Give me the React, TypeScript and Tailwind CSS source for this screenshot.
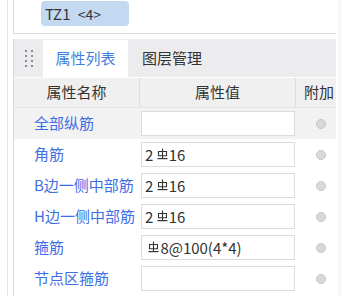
import React from "react";

const rows = [
  { name: "全部纵筋", value: "", gray: true },
  { name: "角筋", value: "2 |16" },
  { name: "B边一侧中部筋", value: "2 |16" },
  { name: "H边一侧中部筋", value: "2 |16" },
  { name: "箍筋", value: " |8@100(4*4)" },
  { name: "节点区箍筋", value: "" },
];

const Rebar = () => (
  <svg width="11" height="14" viewBox="0 0 11 14" className="inline-block mr-[1px] -mt-[4px] align-middle">
    <path d="M5.5 0.5V10.5" stroke="#333" strokeWidth="1.1" fill="none" />
    <path d="M1.5 3.5H9.5V7.8H1.5Z" stroke="#333" strokeWidth="1.1" fill="none" />
    <path d="M0.5 10.6H10.5" stroke="#333" strokeWidth="1.2" />
  </svg>
);

const Value = ({ text }: { text: string }) => {
  const parts = text.split("|");
  return (
    <>
      {parts.map((p, i) => (
        <React.Fragment key={i}>
          {i > 0 && <Rebar />}
          {p}
        </React.Fragment>
      ))}
    </>
  );
};

export default function App() {
  return (
    <div
      className="w-[341px] h-[296px] bg-white overflow-hidden flex text-[#333]"
      style={{ fontFamily: '"Noto Sans CJK SC", "Noto Sans", sans-serif' }}
    >
      <div className="w-[7px] shrink-0" />
      <div className="w-px shrink-0 bg-[#e3e3e3]" />
      <div className="w-[5px] shrink-0" />
      <div className="w-[323px] shrink-0 flex flex-col">
        <div className="h-[34px] border-l border-b border-[#dcdcdc] pl-[27px] pt-px">
          <div className="w-[88px] h-[25px] rounded-[4px] bg-[#c3d9f2] text-[15px] leading-[25px] pl-[4px] text-[#333] whitespace-pre">
            TZ1 <span className="ml-[4px] text-[14px]">&lt;4&gt;</span>
          </div>
        </div>
        <div className="h-[5px]" />
        <div className="flex-1 border-l border-[#dcdcdc] flex flex-col">
          <div className="h-[38px] bg-[#ececef] flex items-stretch pt-px">
            <div className="w-[29px] flex items-center justify-center">
              <div className="grid grid-cols-2 gap-x-[4px] gap-y-[3px] ml-[1px]">
                {Array.from({ length: 8 }).map((_, i) => (
                  <div key={i} className="w-[2px] h-[2px] bg-[#8a8a8a]" />
                ))}
              </div>
            </div>
            <div className="w-[85px] bg-white text-[#3f7fe0] text-[15px] flex items-center justify-center">
              属性列表
            </div>
            <div className="pl-[14px] text-[15px] text-[#333] flex items-center">图层管理</div>
          </div>
          <div className="h-px bg-white" />
          <div className="h-[30px] bg-[#f0f0f0] flex text-[15px] text-[#333] border-b border-[#e6e6e6]">
            <div className="w-[126px] flex items-center justify-center border-r border-[#dedede]">属性名称</div>
            <div className="w-[156px] flex items-center justify-center border-r border-[#dedede]">属性值</div>
            <div className="flex-1 flex items-center pl-[8px] whitespace-nowrap">附加</div>
          </div>
          {rows.map((r) => (
            <div
              key={r.name}
              className={`h-[31px] flex items-center ${r.gray ? "bg-[#f2f2f2]" : "bg-white"}`}
            >
              <div className="w-[126px] pl-[20px] text-[15px] text-[#3e6ee6] whitespace-nowrap">{r.name}</div>
              <div className="w-[154px] h-[25px] ml-px bg-white border border-[#dcdcdc] text-[15px] leading-[23px] pl-[3px] text-[#333] whitespace-pre">
                <Value text={r.value} />
              </div>
              <div className="flex-1 flex pl-[21px]">
                <div className="w-[10px] h-[10px] rounded-full bg-[#d9d9d9] border border-[#c6c6c6]" />
              </div>
            </div>
          ))}
        </div>
      </div>
      <div className="flex-1 bg-gradient-to-r from-white to-[#f4f4f4]" />
    </div>
  );
}
